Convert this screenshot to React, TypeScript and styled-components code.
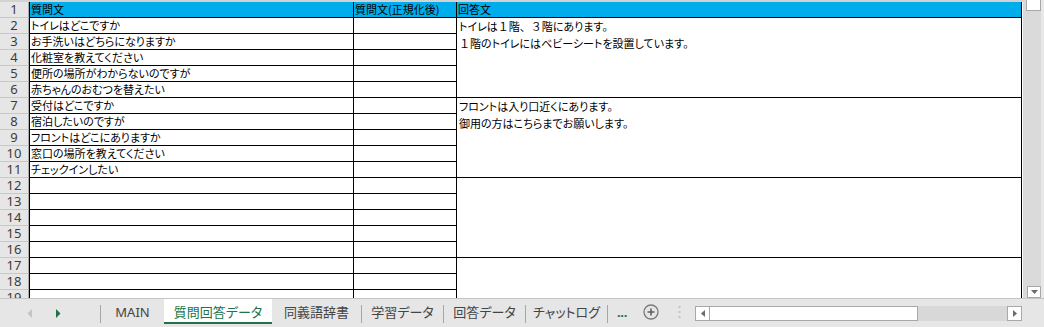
import React from "react";
import styled, { createGlobalStyle } from "styled-components";

const GlobalStyle = createGlobalStyle`
  html, body {
    margin: 0;
    padding: 0;
    background: #fff;
    overflow: hidden;
  }
  body {
    font-family: "Noto Sans", "Noto Sans CJK JP", sans-serif;
  }
`;

const EXCEL_GREEN = "#217346";
const HEAD_BLUE = "#00adec";

const questions = [
  "トイレはどこですか",
  "お手洗いはどちらになりますか",
  "化粧室を教えてください",
  "便所の場所がわからないのですが",
  "赤ちゃんのおむつを替えたい",
  "受付はどこですか",
  "宿泊したいのですが",
  "フロントはどこにありますか",
  "窓口の場所を教えてください",
  "チェックインしたい",
  "",
  "",
  "",
  "",
  "",
  "",
  "",
  "",
];

const answers = [
  {
    start: 2,
    span: 5,
    text: "トイレは１階、３階にあります。\n１階のトイレにはベビーシートを設置しています。",
  },
  {
    start: 7,
    span: 5,
    text: "フロントは入り口近くにあります。\n御用の方はこちらまでお願いします。",
  },
  { start: 12, span: 5, text: "" },
  { start: 17, span: 5, text: "" },
];

const tabs = [
  { label: "MAIN", w: 63 },
  { label: "質問回答データ", w: 108, active: true },
  { label: "同義語辞書", w: 89 },
  { label: "学習データ", w: 81 },
  { label: "回答データ", w: 81 },
  { label: "チャットログ", w: 81 },
];

// full-width digits and 、 keep their full em width, like the sheet's font
const renderAnswer = (text: string) =>
  text.split(/([０-９、])/).map((part, i) =>
    /^[０-９、]$/.test(part) ? <Wide key={i}>{part}</Wide> : part
  );

const App = () => (
  <>
    <GlobalStyle />
    <Window>
      <Main>
        <SheetPane>
          <Sheet>
            <RowHead>1</RowHead>
            <QCell $head>質問文</QCell>
            <Cell $head>質問文(正規化後)</Cell>
            <Cell $head>回答文</Cell>
            {answers.map((a) => (
              <AnswerCell key={a.start} $start={a.start} $span={a.span}>
                {renderAnswer(a.text)}
              </AnswerCell>
            ))}
            {questions.map((q, i) => (
              <React.Fragment key={i}>
                <RowHead>{i + 2}</RowHead>
                <QCell>{q}</QCell>
                <Cell />
              </React.Fragment>
            ))}
          </Sheet>
        </SheetPane>
        <VScroll>
          <VThumb />
          <ScrollBtn>
            <svg width="7" height="4" viewBox="0 0 7 4">
              <polygon points="0,0 7,0 3.5,4" fill="#6b6b6b" />
            </svg>
          </ScrollBtn>
        </VScroll>
      </Main>
      <TabBar>
        <Nav>
          <svg width="5" height="9" viewBox="0 0 5 9">
            <polygon points="5,0 5,9 0.5,4.5" fill="#c4c4c4" />
          </svg>
          <svg width="5" height="9" viewBox="0 0 5 9">
            <polygon points="0,0 0,9 4.5,4.5" fill={EXCEL_GREEN} />
          </svg>
        </Nav>
        <Sep />
        {tabs.map((t, i) => {
          const next = tabs[i + 1];
          const showSep = !t.active && (!next || !next.active);
          return (
            <React.Fragment key={t.label}>
              <Tab $w={t.w} $active={t.active}>
                {t.label}
              </Tab>
              {showSep && <Sep />}
            </React.Fragment>
          );
        })}
        <Ellipsis>...</Ellipsis>
        <AddSheet width="16" height="16" viewBox="0 0 16 16">
          <circle cx="8" cy="8" r="7" fill="none" stroke="#7a7a7a" strokeWidth="1.3" />
          <path d="M8 4.5v7M4.5 8h7" stroke="#5f5f5f" strokeWidth="1.6" />
        </AddSheet>
        <Grip width="3" height="14" viewBox="0 0 3 14">
          <rect x="0.5" y="1" width="2" height="2" fill="#c2c2c2" />
          <rect x="0.5" y="6" width="2" height="2" fill="#c2c2c2" />
          <rect x="0.5" y="11" width="2" height="2" fill="#c2c2c2" />
        </Grip>
        <HScroll>
          <ScrollBtn>
            <svg width="4" height="7" viewBox="0 0 4 7">
              <polygon points="4,0 4,7 0,3.5" fill="#6b6b6b" />
            </svg>
          </ScrollBtn>
          <HThumb />
          <HTrack />
          <ScrollBtn>
            <svg width="4" height="7" viewBox="0 0 4 7">
              <polygon points="0,0 0,7 4,3.5" fill="#6b6b6b" />
            </svg>
          </ScrollBtn>
        </HScroll>
      </TabBar>
    </Window>
  </>
);

export default App;

const Window = styled.div`
  width: 1044px;
  height: 327px;
  display: flex;
  flex-direction: column;
  overflow: hidden;
  background: #fff;
`;

const Main = styled.div`
  display: flex;
  height: 298px;
`;

const SheetPane = styled.div`
  width: 1023px;
  height: 298px;
  overflow: hidden;
`;

const Sheet = styled.div`
  display: grid;
  grid-template-columns: 29px 325px 103px 565px;
  grid-auto-rows: 16px;
  border-top: 2px solid #d2d2d2;
`;

const RowHead = styled.div`
  box-sizing: border-box;
  grid-column: 1;
  background: #e6e6e6;
  border-right: 1px solid #ababab;
  border-bottom: 1px solid #c8c8c8;
  color: #3c3c3c;
  font: 13px/15px "Noto Sans", sans-serif;
  text-align: center;
`;

const Cell = styled.div<{ $head?: boolean }>`
  box-sizing: border-box;
  background: ${(p) => (p.$head ? HEAD_BLUE : "#fff")};
  border-right: 1px solid #000;
  border-bottom: 1px solid #000;
  padding-left: 1px;
  color: #000;
  font: 11px/15px "Noto Sans CJK JP", sans-serif;
  font-feature-settings: "palt";
  white-space: nowrap;
  overflow: hidden;
`;

const QCell = styled(Cell)`
  border-left: 1px solid #000;
`;

const AnswerCell = styled.div<{ $start: number; $span: number }>`
  box-sizing: border-box;
  grid-column: 4;
  grid-row: ${(p) => p.$start} / span ${(p) => p.$span};
  border-right: 1px solid #000;
  border-bottom: 1px solid #000;
  padding-left: 2px;
  color: #000;
  font: 11px/16.7px "Noto Sans CJK JP", sans-serif;
  font-feature-settings: "palt";
  white-space: pre;
  overflow: hidden;
`;

const Wide = styled.span`
  font-feature-settings: normal;
`;

const VScroll = styled.div`
  box-sizing: border-box;
  width: 21px;
  height: 298px;
  background: #dadada;
  border-right: 3px solid #e8e8e8;
  padding-left: 3px;
  display: flex;
  flex-direction: column;
  justify-content: space-between;
  align-items: flex-start;
`;

const VThumb = styled.div`
  box-sizing: border-box;
  width: 15px;
  height: 11px;
  background: #fff;
  border: 1px solid #a8a8a8;
  border-top: none;
`;

const ScrollBtn = styled.div`
  box-sizing: border-box;
  width: 15px;
  height: 13px;
  background: #fff;
  border: 1px solid #a8a8a8;
  display: flex;
  align-items: center;
  justify-content: center;
  flex-shrink: 0;

  ${VScroll} & {
    width: 14px;
    margin-left: 1px;
    height: 12px;
  }
`;

const TabBar = styled.div`
  box-sizing: border-box;
  height: 29px;
  border-top: 1px solid #c6c6c6;
  background: #e6e6e6;
  display: flex;
  align-items: flex-start;
`;

const Nav = styled.div`
  box-sizing: border-box;
  width: 100px;
  height: 28px;
  padding-left: 27px;
  display: flex;
  align-items: center;
  gap: 24px;
`;

const Sep = styled.div`
  width: 1px;
  height: 18px;
  margin-top: 6px;
  background: #a6a6a6;
  flex-shrink: 0;
`;

const Tab = styled.div<{ $w: number; $active?: boolean }>`
  box-sizing: border-box;
  width: ${(p) => p.$w}px;
  height: 25px;
  padding-top: 2px;
  display: flex;
  align-items: center;
  justify-content: center;
  flex-shrink: 0;
  font-size: 13px;
  font-feature-settings: "palt";
  color: ${(p) => (p.$active ? EXCEL_GREEN : "#444")};
  background: ${(p) => (p.$active ? "#fff" : "transparent")};
  border-bottom: 2px solid ${(p) => (p.$active ? EXCEL_GREEN : "transparent")};
  white-space: nowrap;
`;

const Ellipsis = styled.div`
  box-sizing: border-box;
  width: 21px;
  height: 25px;
  padding-left: 9px;
  display: flex;
  align-items: center;
  color: ${EXCEL_GREEN};
  font-size: 13px;
  font-weight: 700;
  letter-spacing: -0.3px;
`;

const AddSheet = styled.svg`
  margin: 5px 0 0 14px;
  flex-shrink: 0;
`;

const Grip = styled.svg`
  margin: 6px 0 0 19px;
  flex-shrink: 0;
`;

const HScroll = styled.div`
  display: flex;
  width: 327px;
  height: 15px;
  margin: 7px 0 0 14px;
  flex-shrink: 0;

  ${ScrollBtn} {
    height: 15px;
  }
`;

const HThumb = styled.div`
  box-sizing: border-box;
  width: 208px;
  height: 15px;
  background: #fff;
  border: 1px solid #a8a8a8;
  border-left: none;
`;

const HTrack = styled.div`
  flex: 1;
  height: 15px;
  background: #d8d8d8;
`;
